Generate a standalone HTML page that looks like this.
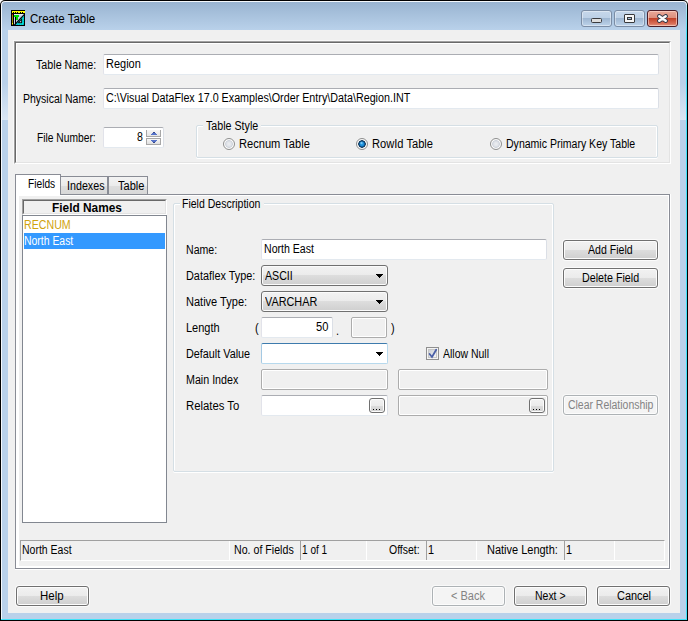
<!DOCTYPE html>
<html><head><meta charset="utf-8">
<style>
*{box-sizing:border-box;margin:0;padding:0}
html,body{width:688px;height:621px;overflow:hidden;background:#fff}
body{position:relative;font-family:"Liberation Sans",sans-serif}
.a{position:absolute}
.t{position:absolute;font:12px/14px "Liberation Sans",sans-serif;white-space:nowrap;transform-origin:0 0}
/* frame */
#frame{left:0;top:0;width:688px;height:621px;background:#000;border-radius:5px 5px 0 0}
#hl{left:1px;top:1px;width:686px;height:619px;border-radius:4px 4px 0 0;background:#f4f8fc}
#blue{left:2px;top:2px;width:684px;height:617px;border-radius:3px 3px 0 0;
  background:linear-gradient(to bottom,#99b4d1 0px,#b9d1ea 28px,#b9d1ea 81px,#dbe7f4 118px,#b9d1ea 118px)}
#blue2{left:2px;top:30px;width:684px;height:589px;border-right:1px solid #c9cde9;border-bottom:1px solid #c9cde9}
#client{left:8px;top:30px;width:672px;height:583px;background:#f0f0f0}
.win{border:1px solid #7b8da5;border-radius:3px;box-shadow:inset 0 0 0 1px rgba(255,255,255,.4);
  background:linear-gradient(to bottom,#c6d7ea 0,#bcd0e6 50%,#9fb7d2 50%,#bdd3ea 100%)}
.close{border:1px solid #4c1d27;border-radius:3px;box-shadow:inset 0 0 0 1px rgba(255,220,210,.6);
  background:linear-gradient(to bottom,#e9a898 0,#dc8c7a 50%,#c2432a 50%,#d9705a 85%,#e49a86 100%)}
/* etched panel */
.sunk{border-style:solid;border-width:1px;border-color:#a0a0a0 #fff #fff #a0a0a0}
.edit{background:#fff;border:1px solid;border-color:#abadb3 #dbdfe6 #e3e9ef #e2e3ea;border-radius:2px}
.dis{background:#f0f0f0;border:1px solid #acacac;border-radius:2px;box-shadow:inset 1px 1px 0 #fff,inset -1px -1px 0 #fff}
.btn{border:1px solid #707070;border-radius:3px;box-shadow:0 0 0 1px rgba(255,255,255,.7),inset 0 0 0 1px #fcfcfc;
  background:linear-gradient(to bottom,#f2f2f2 0,#ebebeb 50%,#dddddd 50%,#cfcfcf 100%)}
.btnd{border:1px solid #adb2b5;border-radius:3px;background:#f4f4f4;box-shadow:0 0 0 1px rgba(255,255,255,.6),inset 0 0 0 1px #fcfcfc}
.combo{border:1px solid #707070;border-radius:3px;box-shadow:inset 0 0 0 1px #fbfbfb;
  background:linear-gradient(to bottom,#f2f2f2 0,#ebebeb 50%,#dddddd 50%,#cfcfcf 100%)}
.grp{border:1px solid #d5dfe5;border-radius:2px;box-shadow:inset 1px 1px 0 #fff,inset -1px 0 0 #fff,0 1px 0 #fff}
.arrow{width:0;height:0;border-left:3.5px solid transparent;border-right:3.5px solid transparent;border-top:4px solid #000}
.radio{width:12px;height:12px;border-radius:50%;border:1px solid #8e8f8f;
  background:radial-gradient(circle at 50% 50%,#eceef1 0,#e2e5ea 2px,#cfd4dc 3.6px,#fafafa 4.1px,#fafafa 5px)}
.tab{border:1px solid #898c95;border-bottom:none;background:linear-gradient(to bottom,#f3f3f3 0,#ebebeb 50%,#dedede 50%,#d8d8d8 100%)}
</style></head><body>
<div id="frame" class="a"></div>
<div id="hl" class="a"></div>
<div class="a" style="left:686px;top:5px;width:1px;height:615px;background:linear-gradient(#b8e8f6,#40e2f8 30px)"></div>
<div class="a" style="left:1px;top:619px;width:686px;height:1px;background:#40e2f8"></div>
<div id="blue" class="a"></div>
<div id="client" class="a"></div>

<!-- icon -->
<svg class="a" style="left:11px;top:10px" width="14" height="16" viewBox="0 0 14 16" shape-rendering="crispEdges">
  <rect x="0" y="0" width="14" height="16" fill="#000"/>
  <rect x="1" y="1" width="13" height="2" fill="#ffff00"/>
  <rect x="2" y="2" width="1" height="1" fill="#000"/><rect x="4" y="2" width="1" height="1" fill="#000"/><rect x="6" y="2" width="1" height="1" fill="#000"/><rect x="9" y="2" width="1" height="1" fill="#000"/><rect x="11" y="2" width="1" height="1" fill="#000"/>
  <rect x="1" y="4" width="1" height="11" fill="#9a8a00"/>
  <rect x="1" y="4" width="1" height="1" fill="#c00000"/>
  <rect x="1" y="13" width="1" height="1" fill="#ffff00"/>
  <rect x="3" y="4" width="10" height="11" fill="#c9d3e8"/>
  <rect x="3" y="4" width="10" height="1" fill="#e6ecf4"/>
  <rect x="3" y="5" width="5" height="2" fill="#00dd00"/><rect x="5" y="5" width="2" height="5" fill="#00dd00"/>
  <rect x="4" y="7" width="1" height="7" fill="#000"/>
</svg>
<svg class="a" style="left:11px;top:10px" width="14" height="16" viewBox="0 0 14 16">
  <path d="M2.6 15 L13 4 L13 15 Z" fill="#000"/>
  <path d="M4.2 15 L13 5.6 L13 15 Z" fill="#00eeee"/>
  <path d="M6.4 13.2 L11.2 8.1 L11.2 13.2 Z" fill="#000"/>
  <path d="M8.4 12.2 L10.2 10.3 L10.2 12.2 Z" fill="#c9d3e8"/>
  <path d="M4.2 15 L13 5.6 L13 15 Z" fill="none" stroke="#000" stroke-width="0.6" stroke-dasharray="1 1"/>
</svg>

<!-- caption buttons -->
<div class="a win" style="left:581px;top:10px;width:31px;height:17px"></div>
<div class="a" style="left:591px;top:18px;width:11px;height:5px;border:1px solid #3a3b3e;border-radius:1.5px;background:#dedede"></div>
<div class="a win" style="left:614px;top:10px;width:31px;height:17px"></div>
<div class="a" style="left:624px;top:14px;width:11px;height:9px;border:1px solid #38393b;border-radius:1px;background:#f6f6f6"></div>
<div class="a" style="left:627px;top:17px;width:5px;height:3px;border:1px solid #38393b;background:#a9c2dc"></div>
<div class="a close" style="left:647px;top:10px;width:31px;height:17px"></div>
<svg class="a" style="left:657px;top:14px" width="11" height="9" viewBox="0 0 11 9">
  <path d="M2.3 2.2 L8.7 6.8 M8.7 2.2 L2.3 6.8" stroke="#343a4a" stroke-width="4.4" stroke-linecap="round"/>
  <path d="M2.3 2.2 L8.7 6.8 M8.7 2.2 L2.3 6.8" stroke="#fbfbfb" stroke-width="2.5" stroke-linecap="round"/>
</svg>

<!-- top sunken panel -->
<div class="a" style="left:13px;top:40px;width:659px;height:125px;border:1px solid;border-color:#f8f8f8 transparent transparent #f8f8f8"></div>
<div class="a" style="left:14px;top:41px;width:657px;height:123px;border:1px solid;border-color:#a0a0a0 #fff #fff #a0a0a0"></div>
<div class="a" style="left:15px;top:42px;width:655px;height:121px;border:1px solid;border-color:#696969 #e3e3e3 #e3e3e3 #696969"></div>
<div class="a" style="left:16px;top:43px;width:653px;height:119px;border:1px solid;border-color:#fff transparent transparent #fff"></div>

<div class="a edit" style="left:103px;top:54px;width:556px;height:21px"></div>
<div class="a edit" style="left:103px;top:88px;width:556px;height:21px"></div>
<div class="a edit" style="left:103px;top:127px;width:61px;height:21px"></div>
<!-- spin -->
<div class="a" style="left:146px;top:130px;width:15px;height:7px;border:1px solid #a7a7a7;border-top:none;background:linear-gradient(#f6f6f6,#e4e4e4)"></div>
<div class="a" style="left:146px;top:138px;width:15px;height:7px;border:1px solid #a7a7a7;background:linear-gradient(#f6f6f6,#e0e0e0)"></div>
<svg class="a" style="left:151px;top:132px" width="6" height="3" shape-rendering="crispEdges" fill="#5572c8"><rect x="2" y="0" width="2" height="1" fill="#34478a"/><rect x="1" y="1" width="4" height="1"/><rect x="0" y="2" width="6" height="1"/></svg>
<svg class="a" style="left:151px;top:140px" width="6" height="3" shape-rendering="crispEdges" fill="#5572c8"><rect x="0" y="0" width="6" height="1"/><rect x="1" y="1" width="4" height="1"/><rect x="2" y="2" width="2" height="1" fill="#34478a"/></svg>

<!-- table style group -->
<div class="a grp" style="left:196px;top:125px;width:462px;height:33px"></div>
<div class="a" style="left:203px;top:119px;width:58px;height:12px;background:#f0f0f0"></div>
<div class="a radio" style="left:223px;top:138px"></div>
<div class="a radio" style="left:356px;top:138px;background:radial-gradient(circle at 4.5px 4px,#9fe0ff 0,rgba(42,162,234,0) 1.6px),radial-gradient(circle at 50% 50%,#2aa2ea 0,#1a8ad6 2px,#0c3d6a 3px,#163d5e 3.5px,#f8f8f8 4px,#f8f8f8 5px)"></div>
<div class="a radio" style="left:490px;top:138px"></div>

<!-- tab control -->
<div class="a" style="left:15px;top:194px;width:655px;height:375px;border:1px solid #898c95;background:#fff"></div>
<div class="a" style="left:19px;top:196px;width:649px;height:370px;background:#f0f0f0"></div>
<div class="a" style="left:670px;top:194px;width:1px;height:376px;background:#fff"></div>
<div class="a" style="left:15px;top:569px;width:656px;height:1px;background:#fff"></div>
<div class="a tab" style="left:60px;top:176px;width:48px;height:18px"></div>
<div class="a tab" style="left:108px;top:176px;width:40px;height:18px"></div>
<div class="a" style="left:15px;top:174px;width:46px;height:21px;border:1px solid #898c95;border-bottom:none;background:#fff"></div>

<!-- field names header -->
<div class="a" style="left:22px;top:199px;width:145px;height:16px;border:1px solid;border-color:#a0a0a0 #fff #fff #a0a0a0"></div>
<div class="a" style="left:23px;top:200px;width:143px;height:14px;border:1px solid;border-color:#696969 #e3e3e3 #e3e3e3 #696969"></div>
<!-- list -->
<div class="a" style="left:22px;top:215px;width:145px;height:308px;border:1px solid #828790;background:#fff"></div>
<div class="a" style="left:24px;top:233px;width:141px;height:16px;background:#3399ff"></div>

<!-- field description group -->
<div class="a grp" style="left:173px;top:203px;width:381px;height:269px"></div>
<div class="a" style="left:180px;top:197px;width:84px;height:12px;background:#f0f0f0"></div>

<div class="a edit" style="left:261px;top:239px;width:286px;height:21px"></div>
<div class="a combo" style="left:261px;top:265px;width:127px;height:21px"></div>
<svg class="a" style="left:376px;top:274px" width="7" height="4" shape-rendering="crispEdges"><rect x="0" y="0" width="7" height="1"/><rect x="1" y="1" width="5" height="1"/><rect x="2" y="2" width="3" height="1"/><rect x="3" y="3" width="1" height="1"/></svg>
<div class="a combo" style="left:261px;top:291px;width:127px;height:21px"></div>
<svg class="a" style="left:376px;top:300px" width="7" height="4" shape-rendering="crispEdges"><rect x="0" y="0" width="7" height="1"/><rect x="1" y="1" width="5" height="1"/><rect x="2" y="2" width="3" height="1"/><rect x="3" y="3" width="1" height="1"/></svg>
<div class="a edit" style="left:261px;top:317px;width:72px;height:21px"></div>
<div class="a dis" style="left:351px;top:317px;width:36px;height:21px"></div>
<div class="a" style="left:261px;top:343px;width:127px;height:21px;background:#fff;border:1px solid;border-color:#3d7bad #b7d9ed #b7d9ed #a4c9e3;border-radius:2px"></div>
<svg class="a" style="left:376px;top:352px" width="7" height="4" shape-rendering="crispEdges"><rect x="0" y="0" width="7" height="1"/><rect x="1" y="1" width="5" height="1"/><rect x="2" y="2" width="3" height="1"/><rect x="3" y="3" width="1" height="1"/></svg>
<!-- checkbox -->
<div class="a" style="left:426px;top:347px;width:13px;height:13px;border:1px solid #8f8f8f;background:#f4f4f4"></div>
<div class="a" style="left:428px;top:349px;width:9px;height:9px;border:1px solid #c6c6c6;background:linear-gradient(135deg,#cbcfd5,#f6f6f6)"></div>
<svg class="a" style="left:427px;top:348px" width="11" height="11" viewBox="0 0 11 11"><path d="M2.6 6 L5 9 L9.2 1.8" stroke="#4a5fa6" stroke-width="1.8" fill="none" stroke-linecap="round"/></svg>

<div class="a dis" style="left:261px;top:369px;width:127px;height:21px"></div>
<div class="a dis" style="left:398px;top:369px;width:150px;height:21px"></div>
<div class="a edit" style="left:261px;top:395px;width:127px;height:21px"></div>
<div class="a btn" style="left:369px;top:398px;width:16px;height:15px;box-shadow:inset 0 0 0 1px #fcfcfc"></div>
<div class="a dis" style="left:398px;top:395px;width:150px;height:21px"></div>
<div class="a btn" style="left:529px;top:398px;width:16px;height:15px;box-shadow:inset 0 0 0 1px #fcfcfc"></div>
<svg class="a" style="left:369px;top:398px" width="16" height="15"><rect x="4" y="11" width="1" height="1" fill="#000"/><rect x="7" y="11" width="1" height="1" fill="#000"/><rect x="10" y="11" width="1" height="1" fill="#000"/></svg>
<svg class="a" style="left:529px;top:398px" width="16" height="15"><rect x="4" y="11" width="1" height="1" fill="#000"/><rect x="7" y="11" width="1" height="1" fill="#000"/><rect x="10" y="11" width="1" height="1" fill="#000"/></svg>

<div class="a btn" style="left:563px;top:240px;width:95px;height:20px"></div>
<div class="a btn" style="left:563px;top:268px;width:95px;height:20px"></div>
<div class="a btnd" style="left:563px;top:395px;width:95px;height:20px"></div>

<!-- status bar -->
<div class="a" style="left:20px;top:540px;width:645px;height:21px;border:1px solid;border-color:#a0a0a0 #fff #fff #a0a0a0"></div>
<div class="a" style="left:229px;top:541px;width:1px;height:19px;background:#fff"></div>
<div class="a" style="left:300px;top:541px;width:1px;height:19px;background:#a0a0a0"></div>
<div class="a" style="left:366px;top:541px;width:1px;height:19px;background:#fff"></div>
<div class="a" style="left:426px;top:541px;width:1px;height:19px;background:#a0a0a0"></div>
<div class="a" style="left:476px;top:541px;width:1px;height:19px;background:#fff"></div>
<div class="a" style="left:564px;top:541px;width:1px;height:19px;background:#a0a0a0"></div>
<div class="a" style="left:614px;top:541px;width:1px;height:19px;background:#fff"></div>

<!-- bottom buttons -->
<div class="a btn" style="left:16px;top:586px;width:73px;height:20px"></div>
<div class="a btnd" style="left:432px;top:586px;width:73px;height:20px"></div>
<div class="a btn" style="left:514px;top:586px;width:73px;height:20px"></div>
<div class="a btn" style="left:597px;top:586px;width:73px;height:20px"></div>

<div class="t" style="left:30.04px;top:12px;transform:scaleX(0.9621);color:#000;">Create Table</div>
<div class="t" style="left:36.00px;top:58px;transform:scaleX(0.8923);color:#000;">Table Name:</div>
<div class="t" style="left:106.09px;top:57px;transform:scaleX(0.9143);color:#000;">Region</div>
<div class="t" style="left:23.12px;top:92px;transform:scaleX(0.8750);color:#000;">Physical Name:</div>
<div class="t" style="left:106.11px;top:91px;transform:scaleX(0.8950);color:#000;">C:\Visual DataFlex 17.0 Examples\Order Entry\Data\Region.INT</div>
<div class="t" style="left:36.75px;top:131px;transform:scaleX(0.8545);color:#000;">File Number:</div>
<div class="t" style="left:136.60px;top:130px;transform:scaleX(0.8800);color:#000;">8</div>
<div class="t" style="left:206.30px;top:119px;transform:scaleX(0.8895);color:#000;">Table Style</div>
<div class="t" style="left:238.57px;top:137px;transform:scaleX(0.9257);color:#000;">Recnum Table</div>
<div class="t" style="left:371.77px;top:137px;transform:scaleX(0.9266);color:#000;">RowId Table</div>
<div class="t" style="left:505.82px;top:137px;transform:scaleX(0.8779);color:#000;">Dynamic Primary Key Table</div>
<div class="t" style="left:27.85px;top:177px;transform:scaleX(0.8500);color:#000;">Fields</div>
<div class="t" style="left:66.51px;top:179px;transform:scaleX(0.8925);color:#000;">Indexes</div>
<div class="t" style="left:118.20px;top:179px;transform:scaleX(0.9185);color:#000;">Table</div>
<div class="t" style="left:51.61px;top:201px;transform:scaleX(0.9897);color:#000;font-weight:bold;">Field Names</div>
<div class="t" style="left:24.11px;top:218px;transform:scaleX(0.8860);color:#d0a20c;">RECNUM</div>
<div class="t" style="left:24.13px;top:234px;transform:scaleX(0.8691);color:#fff;">North East</div>
<div class="t" style="left:182.12px;top:197px;transform:scaleX(0.8770);color:#000;">Field Description</div>
<div class="t" style="left:185.92px;top:243px;transform:scaleX(0.8812);color:#000;">Name:</div>
<div class="t" style="left:264.12px;top:242px;transform:scaleX(0.8818);color:#000;">North East</div>
<div class="t" style="left:185.89px;top:269px;transform:scaleX(0.9054);color:#000;">Dataflex Type:</div>
<div class="t" style="left:265.00px;top:269px;transform:scaleX(0.8862);color:#000;">ASCII</div>
<div class="t" style="left:185.88px;top:295px;transform:scaleX(0.9187);color:#000;">Native Type:</div>
<div class="t" style="left:265.00px;top:295px;transform:scaleX(0.9036);color:#000;">VARCHAR</div>
<div class="t" style="left:185.88px;top:321px;transform:scaleX(0.9176);color:#000;">Length</div>
<div class="t" style="left:255.09px;top:321px;transform:scaleX(0.9100);color:#000;">(</div>
<div class="t" style="left:315.77px;top:320px;transform:scaleX(0.9273);color:#000;">50</div>
<div class="t" style="left:336.09px;top:324px;transform:scaleX(0.9100);color:#000;">.</div>
<div class="t" style="left:391.00px;top:321px;transform:scaleX(0.9100);color:#000;">)</div>
<div class="t" style="left:185.90px;top:347px;transform:scaleX(0.9014);color:#000;">Default Value</div>
<div class="t" style="left:442.50px;top:347px;transform:scaleX(0.8725);color:#000;">Allow Null</div>
<div class="t" style="left:185.91px;top:373px;transform:scaleX(0.8912);color:#000;">Main Index</div>
<div class="t" style="left:185.86px;top:399px;transform:scaleX(0.9444);color:#000;">Relates To</div>
<div class="t" style="left:588.10px;top:243px;transform:scaleX(0.8796);color:#000;">Add Field</div>
<div class="t" style="left:581.71px;top:271px;transform:scaleX(0.8918);color:#000;">Delete Field</div>
<div class="t" style="left:567.83px;top:398px;transform:scaleX(0.8708);color:#838383;">Clear Relationship</div>
<div class="t" style="left:22.13px;top:543px;transform:scaleX(0.8745);color:#000;">North East</div>
<div class="t" style="left:233.91px;top:543px;transform:scaleX(0.8862);color:#000;">No. of Fields</div>
<div class="t" style="left:301.96px;top:543px;transform:scaleX(0.8393);color:#000;">1 of 1</div>
<div class="t" style="left:388.70px;top:543px;transform:scaleX(0.8727);color:#000;">Offset:</div>
<div class="t" style="left:428.09px;top:543px;transform:scaleX(0.9100);color:#000;">1</div>
<div class="t" style="left:486.69px;top:543px;transform:scaleX(0.9149);color:#000;">Native Length:</div>
<div class="t" style="left:565.79px;top:543px;transform:scaleX(0.9100);color:#000;">1</div>
<div class="t" style="left:40.45px;top:589px;transform:scaleX(0.9545);color:#000;">Help</div>
<div class="t" style="left:450.58px;top:589px;transform:scaleX(0.9171);color:#838383;">&lt; Back</div>
<div class="t" style="left:534.63px;top:589px;transform:scaleX(0.8727);color:#000;">Next &gt;</div>
<div class="t" style="left:616.59px;top:589px;transform:scaleX(0.9114);color:#000;">Cancel</div>
</body></html>
